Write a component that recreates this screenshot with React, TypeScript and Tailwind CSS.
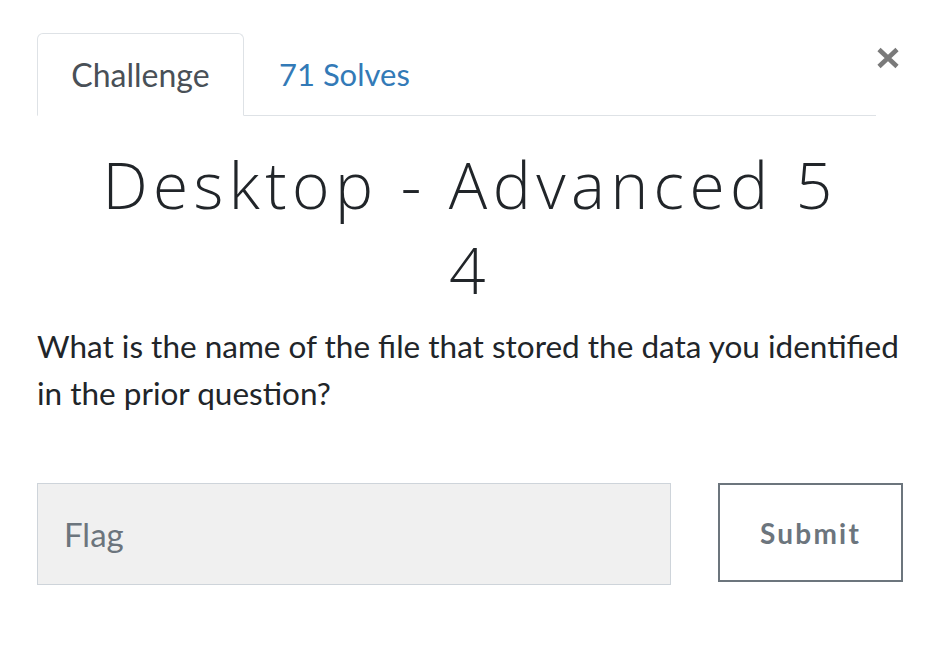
export default function App() {
  return (
    <div className="w-[940px] h-[650px] bg-white font-['Lato','Liberation_Sans',sans-serif] text-[#212529]">
      <div className="pl-[37px] pr-[37px] pt-[33px]">
        <div className="flex items-start">
          <ul className="flex flex-1 border-b border-[#dee2e6]">
            <li className="-mb-px flex h-[83px] w-[207px] items-center justify-center rounded-t-[6px] border border-b-white border-[#dee2e6] bg-white text-[32px] text-[#495057]">
              Challenge
            </li>
            <li className="flex h-[82px] items-center px-[35px] text-[31px] text-[#337ab7]">
              71 Solves
            </li>
          </ul>
          <button className="mr-[3px] mt-[14px] flex h-[22px] w-[24px] shrink-0 items-center justify-center">
            <svg width="24" height="22" viewBox="0 0 24 22">
              <path d="M3 2.5 L21 19.5 M21 2.5 L3 19.5" stroke="#7a7a7a" strokeWidth="4.6" strokeLinecap="butt" />
            </svg>
          </button>
        </div>

        <h1 className="mt-[26px] text-center font-['Open_Sans','Liberation_Sans',sans-serif] text-[64px] font-light leading-[85px] tracking-[0.085em] text-[#212529]">
          Desktop - Advanced 5
          <br />4
        </h1>

        <p className="mt-[11px] -mr-[3px] text-[31.5px] leading-[47px] text-[#212529]">
          What is the name of the file that stored the data you identified in the prior question?
        </p>

        <div className="mt-[66px] flex items-start gap-[47px]">
          <input
            placeholder="Flag"
            className="h-[102px] w-[634px] border border-[#ced4da] bg-[#f0f0f0] px-[26px] text-[33px] text-[#495057] placeholder:text-[#6c757d] outline-none"
          />
          <button className="h-[99px] w-[185px] border-2 border-[#6c757d] bg-white text-[28px] font-bold tracking-[0.08em] text-[#6c757d]">
            Submit
          </button>
        </div>
      </div>
    </div>
  );
}
